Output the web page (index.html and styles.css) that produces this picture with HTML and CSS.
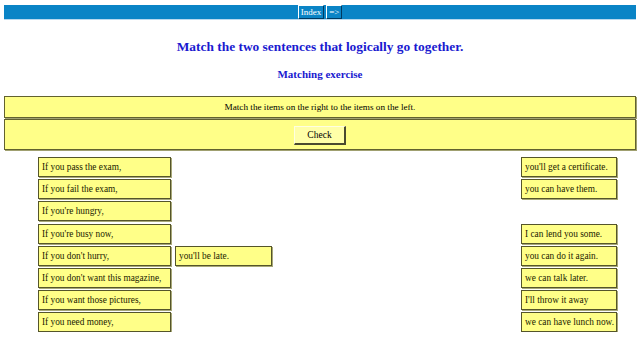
FILE: index.html
```html
<!DOCTYPE html>
<html>
<head>
<meta charset="utf-8">
<link rel="stylesheet" href="styles.css">
</head>
<body>
<div class="navbar">
  <button class="navbtn">Index</button>
  <button class="navbtn">=&gt;</button>
</div>
<h1 class="title">Match the two sentences that logically go together.</h1>
<h3 class="subtitle">Matching exercise</h3>
<div class="panel instructions">Match the items on the right to the items on the left.</div>
<div class="panel checkrow"><button class="check">Check</button></div>
<div class="board">
  <div class="card c1 r1">If you pass the exam,</div>
  <div class="card c4 r1">you'll get a certificate.</div>
  <div class="card c1 r2">If you fail the exam,</div>
  <div class="card c4 r2">you can have them.</div>
  <div class="card c1 r3">If you're hungry,</div>
  <div class="card c1 r4">If you're busy now,</div>
  <div class="card c4 r4">I can lend you some.</div>
  <div class="card c1 r5">If you don't hurry,</div>
  <div class="card c2 r5">you'll be late.</div>
  <div class="card c4 r5">you can do it again.</div>
  <div class="card c1 r6">If you don't want this magazine,</div>
  <div class="card c4 r6">we can talk later.</div>
  <div class="card c1 r7">If you want those pictures,</div>
  <div class="card c4 r7">I'll throw it away</div>
  <div class="card c1 r8">If you need money,</div>
  <div class="card c4 r8">we can have lunch now.</div>
</div>
</body>
</html>
```
FILE: styles.css
```css
html, body {
  margin: 0;
  padding: 0;
  background: #ffffff;
}
body {
  padding: 5px 4px 0 4px;
  font-family: "Liberation Serif", "Times New Roman", serif;
  color: #000000;
}
.navbar {
  background: #0a84c6;
  height: 14px;
  display: flex;
  justify-content: center;
  align-items: stretch;
  gap: 2px;
  border-bottom: 1px solid #b8d8ee;
}
.navbtn {
  font-family: "Liberation Serif", serif;
  font-size: 9px;
  color: #ffffff;
  background: #0a84c6;
  border: 1px solid #ffffff;
  border-right-color: #003a60;
  border-bottom-color: #003a60;
  padding: 0 2px;
  margin: 0;
  line-height: 12px;
}
.title {
  font-size: 13.4px;
  font-weight: bold;
  color: #1a1ad0;
  text-align: center;
  margin: 19px 0 0 0;
  line-height: 16px;
}
.subtitle {
  font-size: 11px;
  font-weight: bold;
  color: #1a1ad0;
  text-align: center;
  margin: 12px 0 0 0;
  line-height: 14px;
}
.panel {
  background: #ffff88;
  border: 1px solid #62622f;
  box-shadow: 1px 1px 0 #a0a070;
  text-align: center;
  font-size: 9.2px;
}
.instructions {
  margin-top: 15px;
  height: 20px;
  line-height: 20px;
}
.checkrow {
  margin-top: 1px;
  height: 29px;
  display: flex;
  justify-content: center;
  align-items: center;
}
.check {
  font-family: "Liberation Serif", serif;
  font-size: 9.5px;
  background: #ffffa8;
  border: 1px solid #ffffe0;
  border-right: 2px solid #4a4a30;
  border-bottom: 2px solid #4a4a30;
  width: 52px;
  height: 19px;
  padding: 0;
  margin-top: 1px;
}
.board {
  display: grid;
  grid-template-columns: 133px 97px 1fr 96px;
  grid-auto-rows: 20px;
  column-gap: 4px;
  row-gap: 2.2px;
  margin: 7px 19px 0 34px;
}
.card {
  background: #ffff88;
  border: 1px solid #55552a;
  box-shadow: 1px 1px 0 #a8a878;
  font-size: 9.3px;
  line-height: 18px;
  padding: 0 3px;
  white-space: nowrap;
  overflow: hidden;
  color: #1a1a00;
}
.c1 { grid-column: 1; }
.c2 { grid-column: 2; }
.c4 { grid-column: 4; }
.r1 { grid-row: 1; }
.r2 { grid-row: 2; }
.r3 { grid-row: 3; }
.r4 { grid-row: 4; }
.r5 { grid-row: 5; }
.r6 { grid-row: 6; }
.r7 { grid-row: 7; }
.r8 { grid-row: 8; }
```
